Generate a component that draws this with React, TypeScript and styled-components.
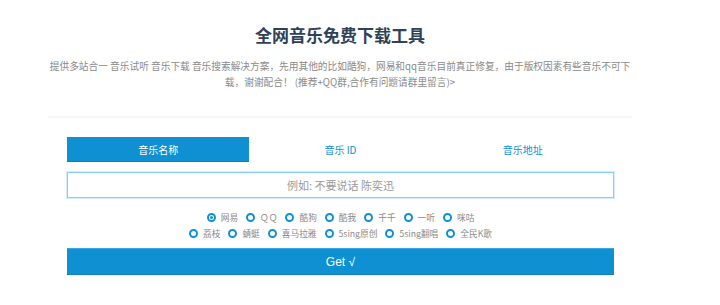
import styled, { createGlobalStyle } from "styled-components";
import { useState } from "react";

const GlobalStyle = createGlobalStyle`
  body {
    margin: 0;
    background: #fff;
    font-family: "Noto Sans CJK SC", "Noto Sans", sans-serif;
  }
`;

const Page = styled.div`
  width: 680px;
  text-align: center;
`;

const Title = styled.h1`
  margin: 0;
  padding-top: 23px;
  font-size: 17px;
  line-height: 24px;
  font-weight: 700;
  color: #2f4256;
`;

const Intro = styled.p`
  margin: 11px 48px 0;
  font-size: 9.7px;
  line-height: 16px;
  color: #8a8a8a;
`;

const Divider = styled.hr`
  margin: 26px 48px 0;
  border: none;
  height: 2px;
  background: #f6f6f6;
`;

const Form = styled.div`
  padding: 19px 66px 0 67px;
`;

const Tabs = styled.div`
  display: grid;
  grid-template-columns: repeat(3, 1fr);
  height: 25px;
`;

const Tab = styled.button<{ $active: boolean }>`
  border: none;
  padding: 0;
  font-family: inherit;
  font-size: 10px;
  cursor: pointer;
  background: ${(p) => (p.$active ? "#0e90d2" : "transparent")};
  color: ${(p) => (p.$active ? "#fff" : "#0e90d2")};
  border-bottom: 1px solid ${(p) => (p.$active ? "#0b82c0" : "transparent")};
`;

const SearchInput = styled.input`
  display: block;
  box-sizing: border-box;
  width: 100%;
  height: 26px;
  margin-top: 10px;
  border: 1px solid #86cff8;
  box-shadow: 0 0 0 1px rgba(134, 207, 248, 0.35);
  outline: none;
  text-align: center;
  font-family: inherit;
  font-size: 11px;
  color: #555;
  &::placeholder {
    color: #9a9a9a;
  }
`;

const Sources = styled.div`
  margin-top: 11px;
  display: flex;
  flex-direction: column;
  align-items: center;
`;

const SourceRow = styled.div`
  display: flex;
  gap: 8px;
  height: 16px;
  align-items: center;
`;

const SourceItem = styled.label`
  display: flex;
  align-items: center;
  gap: 5px;
  font-size: 8.7px;
  color: #8a8a8a;
  cursor: pointer;
`;

const Dot = styled.span<{ $checked: boolean }>`
  box-sizing: border-box;
  width: 9px;
  height: 9px;
  border-radius: 50%;
  border: 2px solid #0e90d2;
  display: flex;
  align-items: center;
  justify-content: center;
  &::after {
    content: "";
    width: 3px;
    height: 3px;
    border-radius: 50%;
    background: ${(p) => (p.$checked ? "#0e90d2" : "transparent")};
  }
`;

const GetButton = styled.button`
  display: block;
  width: 100%;
  height: 27px;
  margin-top: 7px;
  border: none;
  border-top: 1px solid #3aa6df;
  border-bottom: 1px solid #0b80bd;
  background: #0e90d2;
  color: #fff;
  font-family: "Liberation Sans", "DejaVu Sans", sans-serif;
  font-size: 12px;
  cursor: pointer;
`;

const tabs = ["音乐名称", "音乐 ID", "音乐地址"];

const rows = [
  ["网易", "ＱＱ", "酷狗", "酷我", "千千", "一听", "咪咕"],
  ["荔枝", "蜻蜓", "喜马拉雅", "5sing原创", "5sing翻唱", "全民K歌"],
];

function App() {
  const [tab, setTab] = useState(0);
  const [source, setSource] = useState("网易");

  return (
    <>
      <GlobalStyle />
      <Page>
        <Title>全网音乐免费下载工具</Title>
        <Intro>
          提供多站合一 音乐试听 音乐下载 音乐搜索解决方案，先用其他的比如酷狗，网易和qq音乐目前真正修复，由于版权因素有些音乐不可下载，谢谢配合！
          (推荐+QQ群,合作有问题请群里留言)&gt;
        </Intro>
        <Divider />
        <Form>
          <Tabs>
            {tabs.map((t, i) => (
              <Tab key={t} $active={tab === i} onClick={() => setTab(i)}>
                {t}
              </Tab>
            ))}
          </Tabs>
          <SearchInput placeholder="例如: 不要说话 陈奕迅" />
          <Sources>
            {rows.map((row, i) => (
              <SourceRow key={i}>
                {row.map((name) => (
                  <SourceItem key={name} onClick={() => setSource(name)}>
                    <Dot $checked={source === name} />
                    {name}
                  </SourceItem>
                ))}
              </SourceRow>
            ))}
          </Sources>
          <GetButton>Get √</GetButton>
        </Form>
      </Page>
    </>
  );
}

export default App;
